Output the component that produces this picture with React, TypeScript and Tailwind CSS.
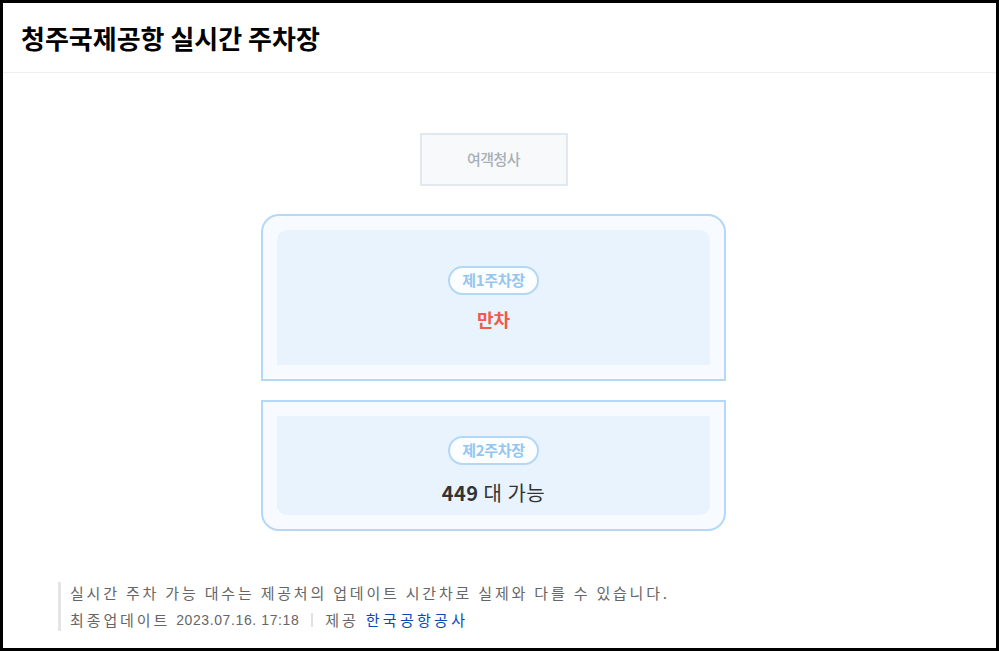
import React from 'react';

const KR = '"Noto Sans CJK KR", "Noto Sans", sans-serif';

interface Lot {
  name: string;
  full: boolean;
  available: number;
}

const lots: Lot[] = [
  { name: '제1주차장', full: true, available: 0 },
  { name: '제2주차장', full: false, available: 449 },
];

function Badge({ name }: { name: string }) {
  return (
    <span className="inline-flex h-[29px] w-[91px] items-center justify-center rounded-full border-2 border-[#b3d8f6] bg-[#fbfdff] text-[15px] font-bold tracking-[-0.3px] text-[#94c6f0]">
      {name}
    </span>
  );
}

export default function App() {
  return (
    <div
      className="flex h-[651px] w-[999px] flex-col overflow-hidden border-[3px] border-black bg-white"
      style={{ fontFamily: KR }}
    >
      {/* Header */}
      <div className="flex h-[70px] shrink-0 items-center border-b border-[#eeeeee] pl-[18px]">
        <h1 className="text-[26px] font-bold leading-none text-black">청주국제공항 실시간 주차장</h1>
      </div>

      {/* Parking map */}
      <div className="flex flex-col items-center pr-[12px] pt-[60px]">
        <div className="flex h-[53px] w-[148px] items-center justify-center border-2 border-[#e1e8ef] bg-[#f7f9fb] text-[15px] font-medium tracking-[-0.5px] text-[#a7afb7]">
          여객청사
        </div>

        <div className="mt-[28px] w-[465px] rounded-t-[18px] border-2 border-[#b5d8f6] bg-[#f7fbff] p-[14px]">
          <div className="flex h-[135px] flex-col items-center rounded-t-[10px] bg-[#e8f3fd] pt-[36px]">
            <Badge name={lots[0].name} />
            <div className="mt-[11px] text-[18px] font-bold leading-[26px] text-[#f2594b]">만차</div>
          </div>
        </div>

        <div className="mt-[19px] w-[465px] rounded-b-[18px] border-2 border-[#b5d8f6] bg-[#f7fbff] p-[14px]">
          <div className="flex h-[99px] flex-col items-center rounded-b-[10px] bg-[#e8f3fd] pt-[20px]">
            <Badge name={lots[1].name} />
            <div className="mt-[14px] text-[20px] leading-[28px] tracking-[0.5px] text-[#333333]">
              <span className="font-bold">{lots[1].available}</span> 대 가능
            </div>
          </div>
        </div>
      </div>

      {/* Footer note */}
      <div className="ml-[55px] mt-[51px] border-l-[3px] border-[#e5e5e5] pl-[9px] text-[15px] text-[#666666]">
        <p className="leading-[22px] tracking-[2.8px]">
          실시간 주차 가능 대수는 제공처의 업데이트 시간차로 실제와 다를 수 있습니다.
        </p>
        <p className="mt-[5px] flex items-center leading-[22px]">
          <span className="tracking-[2.9px]">최종업데이트</span>
          <span
            className="ml-[6px] text-[14px] tracking-[0.6px]"
            style={{ fontFamily: '"Liberation Sans", sans-serif' }}
          >
            2023.07.16. 17:18
          </span>
          <span className="mx-[12px] h-[14px] w-[2px] bg-[#e0e0e0]" />
          <span className="tracking-[2.9px]">제공</span>
          <span className="ml-[7px] tracking-[3.3px] text-[#0b47b9]">한국공항공사</span>
        </p>
      </div>
    </div>
  );
}
